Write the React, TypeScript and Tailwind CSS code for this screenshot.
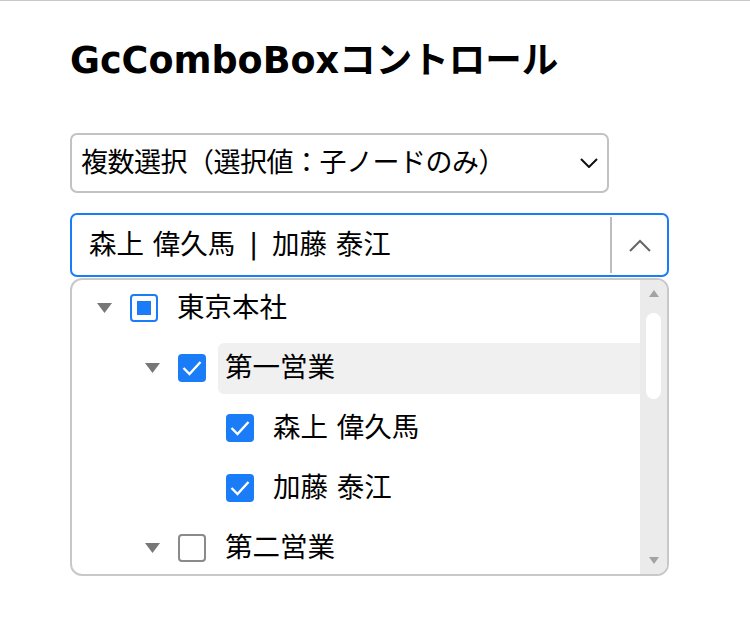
import React from "react";

const FONT = { fontFamily: '"DejaVu Sans", "Noto Sans CJK JP", sans-serif' };

function Triangle() {
  return (
    <svg width="15" height="10" viewBox="0 0 15 10" className="shrink-0">
      <polygon points="0,0 15,0 7.5,10" fill="#777777" />
    </svg>
  );
}

type CheckState = "checked" | "unchecked" | "indeterminate";

function Checkbox({ state }: { state: CheckState }) {
  if (state === "checked") {
    return (
      <div className="w-[28px] h-[28px] shrink-0 rounded-[4px] bg-[#1a7cf6] flex items-center justify-center">
        <svg width="22" height="18" viewBox="0 0 22 18">
          <polyline points="2.5,9 8.5,15 19.5,3" fill="none" stroke="white" strokeWidth="2.4" />
        </svg>
      </div>
    );
  }
  if (state === "indeterminate") {
    return (
      <div className="w-[28px] h-[28px] shrink-0 rounded-[4px] border-2 border-[#1a7cf6] bg-white flex items-center justify-center">
        <div className="w-[14px] h-[14px] bg-[#1a7cf6]" />
      </div>
    );
  }
  return <div className="w-[28px] h-[28px] shrink-0 rounded-[4px] border-2 border-[#8a8a8a] bg-white" />;
}

function Row({
  level,
  label,
  state,
  expandable,
  highlight,
}: {
  level: number;
  label: string;
  state: CheckState;
  expandable: boolean;
  highlight?: boolean;
}) {
  const pad = level === 0 ? "pl-[25px]" : level === 1 ? "pl-[73px]" : "pl-[121px]";
  return (
    <div className={`h-[60px] flex items-center ${pad}`}>
      <div className="w-[15px] flex items-center shrink-0">{expandable ? <Triangle /> : null}</div>
      <div className="ml-[18px]">
        <Checkbox state={state} />
      </div>
      <div
        className={`ml-[12px] flex-1 h-[51px] flex items-center px-[7px] rounded-l-[6px] text-[27.5px] text-black whitespace-nowrap ${
          highlight ? "bg-[#f0f0f0]" : ""
        }`}
      >
        {label}
      </div>
    </div>
  );
}

export default function App() {
  return (
    <div className="w-[750px] h-[620px] bg-white border-t border-[#c8c8c8] overflow-hidden" style={FONT}>
      <div className="pl-[70px] pr-[80px]">
        <h1 className="mt-[38px] text-[36.5px] leading-[44px] font-bold text-black whitespace-nowrap">
          GcComboBoxコントロール
        </h1>

        <div className="mt-[50px] w-[539px] h-[60px] rounded-[7px] border-2 border-[#c2c2c2] flex items-center pl-[9px] pr-[9px]">
          <span className="flex-1 text-[27px] text-black whitespace-nowrap tracking-[-0.5px]">
            複数選択（選択値：子ノードのみ）
          </span>
          <svg width="18" height="10" viewBox="0 0 18 10" className="shrink-0">
            <polyline points="1,1 9,9 17,1" fill="none" stroke="#111111" strokeWidth="2" />
          </svg>
        </div>

        <div className="mt-[20px] w-[599px] h-[64px] rounded-[7px] border-2 border-[#1a7cf6] flex items-center">
          <span className="flex-1 pl-[17px] text-[27.5px] text-black whitespace-nowrap">
            森上 偉久馬<span className="mx-[5px]"> | </span>加藤 泰江
          </span>
          <div className="w-[2px] h-[56px] bg-[#bdbdbd]" />
          <div className="w-[55px] flex items-center justify-center">
            <svg width="22" height="13" viewBox="0 0 22 13">
              <polyline points="1,12 11,2 21,12" fill="none" stroke="#666666" strokeWidth="2" />
            </svg>
          </div>
        </div>

        <div className="mt-[1px] w-[599px] h-[298px] rounded-[12px] border-2 border-[#c8c8c8] flex overflow-hidden">
          <div className="flex-1 -mt-[2px] overflow-hidden">
            <Row level={0} label="東京本社" state="indeterminate" expandable />
            <Row level={1} label="第一営業" state="checked" expandable highlight />
            <Row level={2} label="森上 偉久馬" state="checked" expandable={false} />
            <Row level={2} label="加藤 泰江" state="checked" expandable={false} />
            <Row level={1} label="第二営業" state="unchecked" expandable />
          </div>
          <div className="w-[27px] bg-[#ebebeb] flex flex-col items-center shrink-0">
            <svg width="10" height="7" viewBox="0 0 10 7" className="mt-[10px]">
              <polygon points="0,7 10,7 5,0" fill="#a3a3a3" />
            </svg>
            <div className="mt-[16px] w-[15px] h-[86px] rounded-full bg-white" />
            <div className="flex-1" />
            <svg width="10" height="7" viewBox="0 0 10 7" className="mb-[10px]">
              <polygon points="0,0 10,0 5,7" fill="#a3a3a3" />
            </svg>
          </div>
        </div>
      </div>
    </div>
  );
}
